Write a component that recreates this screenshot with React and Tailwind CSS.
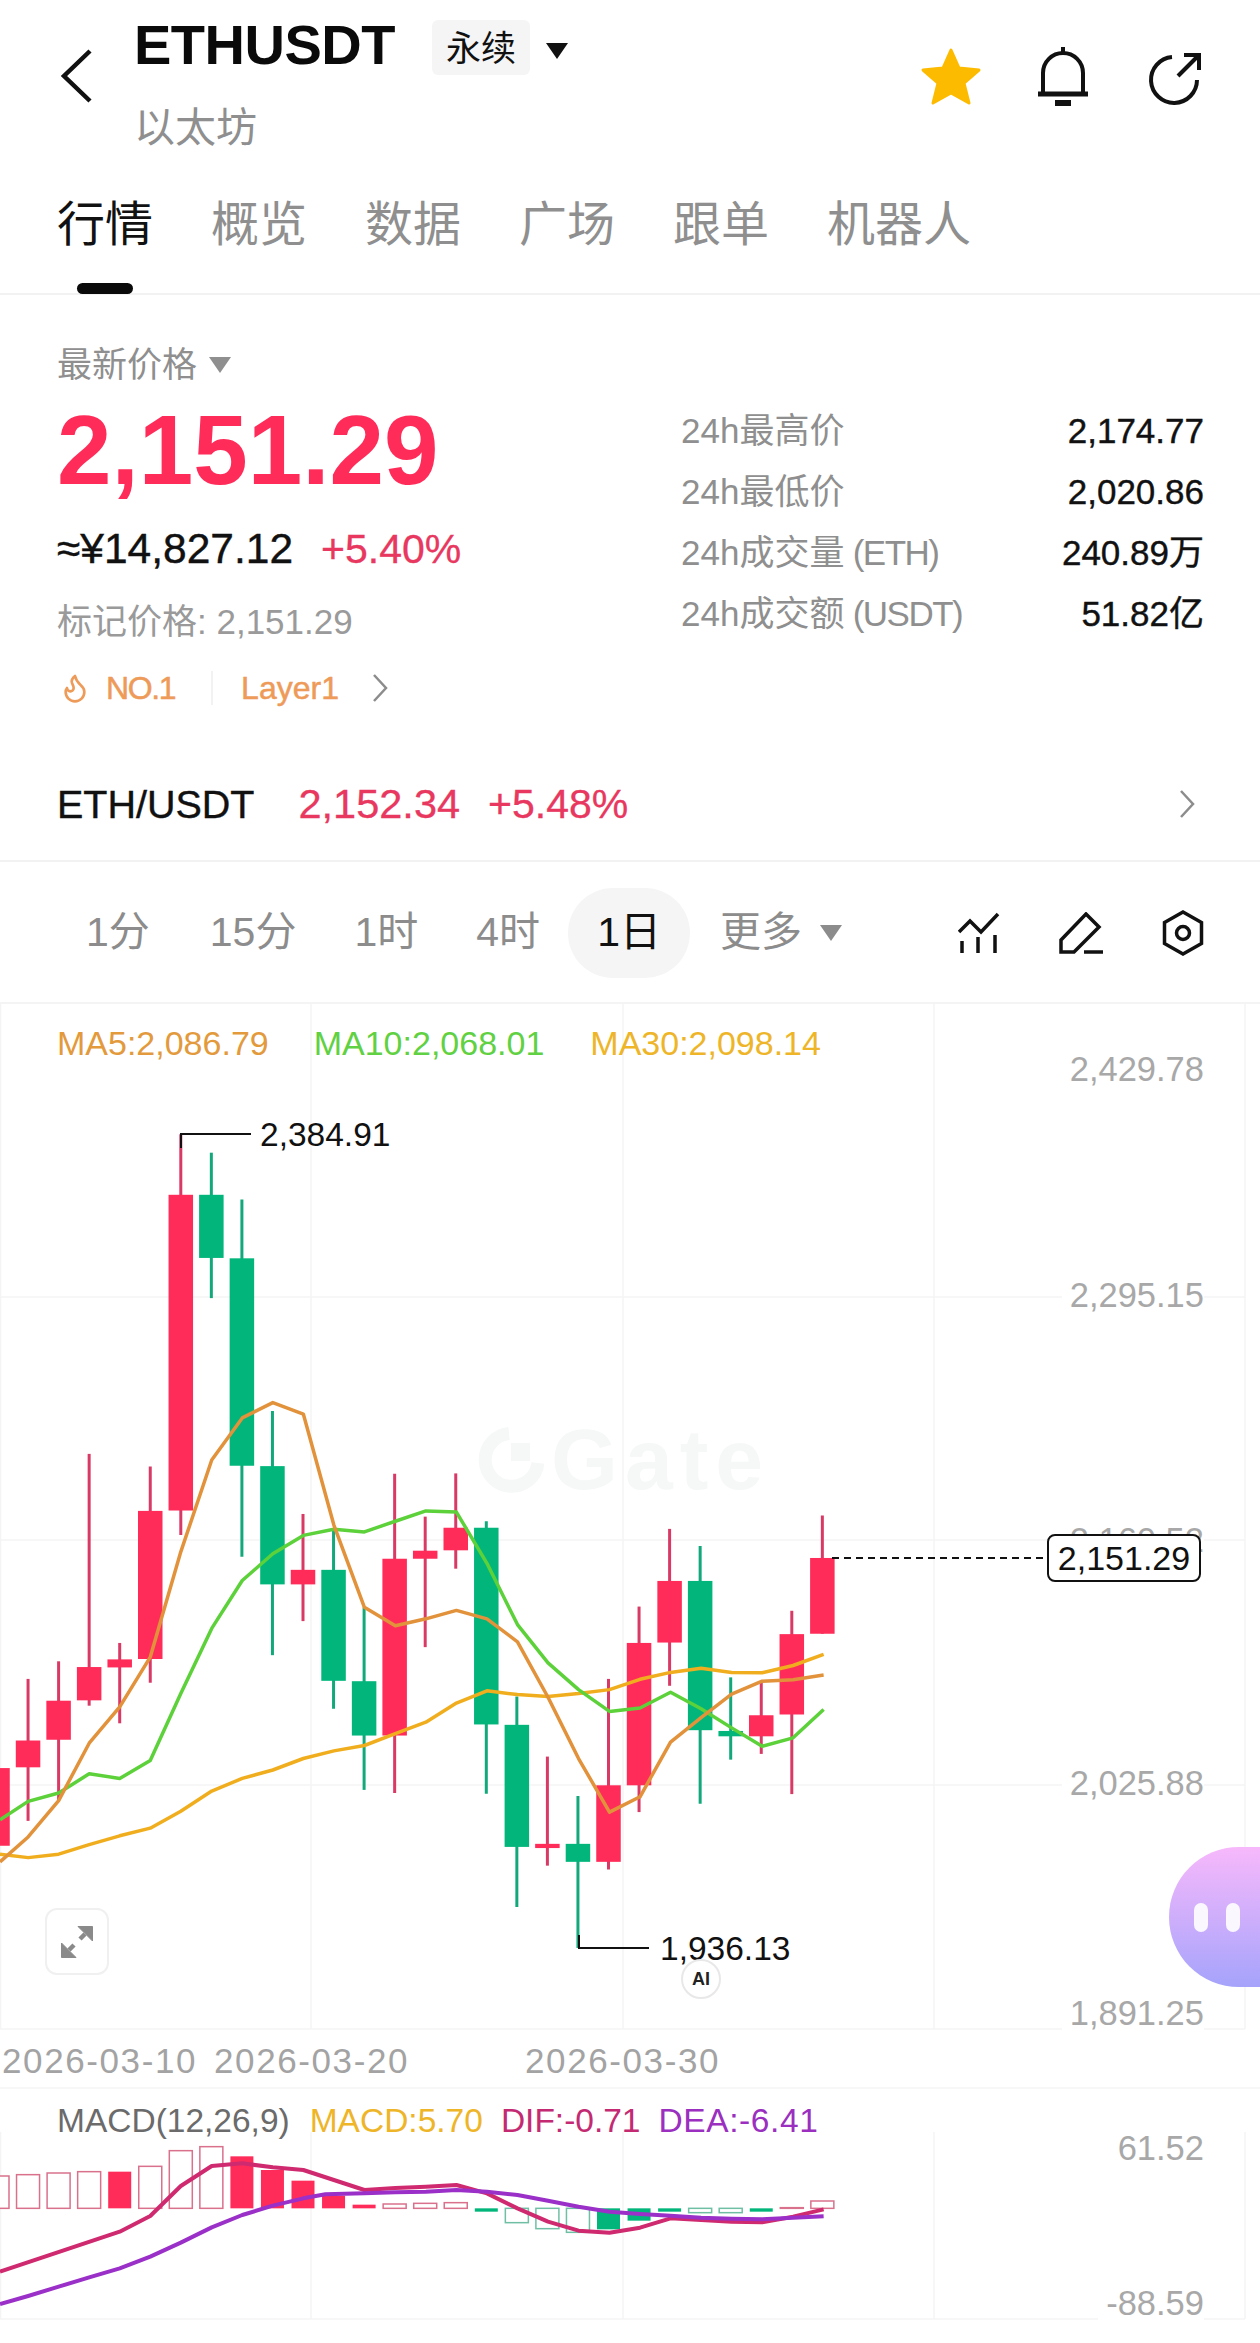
import { Flame } from 'lucide-react'

// trace units from the chart crops -> page pixels
const px = (x) => x / 2.489
const py = (y) => 1460 + y / 2.613
const my = (y) => 2040 + y / 3
const slot = (i) => -2.5 + 30.55 * i

const RED = '#ff2c5a'
const GREEN = '#02b67b'

// [up, wickTop, bodyTop, bodyBottom, wickBottom]
const candles = [
  [1, 760, 805, 1008, 1040],
  [1, 572, 733, 803, 943],
  [1, 526, 629, 731, 890],
  [1, -16, 541, 628, 642],
  [1, 478, 521, 542, 688],
  [1, 17, 133, 520, 582],
  [1, -851, -693, 132, 196],
  [0, -803, -693, -528, -423],
  [0, -681, -527, 15, 253],
  [0, -128, 16, 325, 510],
  [1, 141, 287, 325, 421],
  [0, 180, 287, 577, 650],
  [0, 385, 578, 720, 862],
  [1, 36, 258, 720, 870],
  [1, 148, 237, 258, 489],
  [1, 35, 177, 236, 284],
  [0, 160, 177, 691, 872],
  [0, 618, 692, 1011, 1168],
  [1, 775, 1003, 1014, 1060],
  [0, 878, 1003, 1050, 1275],
  [1, 572, 850, 1050, 1070],
  [1, 383, 478, 850, 920],
  [1, 180, 316, 477, 590],
  [0, 225, 316, 706, 898],
  [0, 568, 708, 722, 783],
  [1, 580, 667, 722, 768],
  [1, 394, 455, 665, 873],
  [1, 145, 256, 454, 454],
]

const ma30 = [[0, 1030], [70, 1039], [146, 1030], [222, 1005], [298, 982], [374, 962], [450, 918], [527, 865], [603, 832], [679, 810], [755, 780], [831, 760], [907, 746], [984, 715], [1060, 685], [1136, 635], [1212, 603], [1288, 613], [1364, 618], [1440, 610], [1517, 600], [1593, 573], [1669, 555], [1745, 544], [1821, 555], [1897, 556], [1974, 537], [2050, 508]]
const ma10 = [[0, 940], [70, 892], [146, 870], [222, 820], [298, 832], [374, 785], [450, 610], [527, 440], [603, 315], [679, 245], [755, 197], [831, 181], [907, 188], [984, 160], [1060, 133], [1136, 136], [1212, 270], [1288, 430], [1364, 530], [1440, 600], [1517, 657], [1593, 648], [1669, 607], [1745, 650], [1821, 700], [1897, 748], [1974, 726], [2050, 652]]
const ma5 = [[0, 1050], [70, 985], [146, 890], [222, 740], [298, 645], [374, 515], [450, 240], [527, 0], [603, -110], [679, -150], [755, -120], [831, 170], [907, 385], [984, 433], [1060, 415], [1136, 393], [1212, 415], [1288, 475], [1364, 620], [1440, 780], [1517, 920], [1593, 880], [1669, 737], [1745, 673], [1821, 612], [1897, 578], [1974, 574], [2050, 562]]

const dif = [[0, 695], [298, 575], [374, 528], [450, 438], [527, 378], [603, 370], [679, 382], [755, 390], [831, 420], [907, 450], [984, 444], [1060, 440], [1136, 435], [1212, 460], [1288, 505], [1364, 545], [1440, 572], [1517, 578], [1593, 563], [1669, 535], [1745, 540], [1821, 545], [1897, 547], [1974, 530], [2050, 508]]
const dea = [[0, 792], [70, 768], [146, 740], [222, 712], [298, 685], [374, 650], [450, 608], [527, 562], [603, 525], [679, 497], [755, 475], [810, 463], [907, 460], [984, 457], [1060, 455], [1136, 450], [1212, 455], [1288, 465], [1364, 482], [1440, 500], [1517, 515], [1593, 522], [1669, 527], [1745, 533], [1821, 536], [1897, 538], [1974, 533], [2050, 529]]

// [value edge, solid, colour]
const bars = [
  [408, 0, 'r'], [404, 0, 'r'], [399, 0, 'r'], [395, 0, 'r'], [395, 1, 'r'], [379, 0, 'r'], [332, 0, 'r'],
  [320, 0, 'r'], [349, 1, 'r'], [390, 1, 'r'], [422, 1, 'r'], [467, 1, 'r'], [494, 1, 'r'], [492, 0, 'r'],
  [490, 0, 'r'], [488, 0, 'r'], [515, 1, 'g'], [548, 0, 'g'], [566, 0, 'g'], [577, 0, 'g'], [568, 1, 'g'],
  [542, 1, 'g'], [515, 1, 'g'], [518, 0, 'g'], [518, 0, 'g'], [515, 1, 'g'], [503, 0, 'r'], [483, 0, 'r'],
]

const toPoints = (line, toY) => line.map(([x, y]) => `${px(x)},${toY(y)}`).join(' ')

function ChartDrawing() {
  return (
    <svg className="absolute inset-0" width="1260" height="1341" viewBox="0 1002 1260 1341" fill="none">
      <g stroke="#f4f4f4" strokeWidth="1.5">
        <line x1="0" y1="1003" x2="1260" y2="1003" strokeWidth="2" />
        <line x1="0" y1="1297" x2="1245" y2="1297" />
        <line x1="0" y1="1540" x2="1245" y2="1540" />
        <line x1="0" y1="1785" x2="1245" y2="1785" />
        <line x1="0" y1="2029" x2="1245" y2="2029" />
        <line x1="0" y1="2088" x2="1260" y2="2088" />
        <line x1="0" y1="2319" x2="1245" y2="2319" />
        {[0.5, 311, 623, 934, 1245].map((x) => (
          <g key={x}>
            <line x1={x} y1="1003" x2={x} y2="2029" />
            <line x1={x} y1="2132" x2={x} y2="2319" />
          </g>
        ))}
      </g>

      {/* watermark mark */}
      <g>
        <path d="M509 1433.5 A26.5 26.5 0 1 0 538 1463" stroke="#f6f7f7" strokeWidth="13" />
        <rect x="511" y="1443" width="19" height="18" fill="#f6f7f7" />
      </g>

      {candles.map(([up, wt, bt, bb, wb], i) => (
        <g key={i}>
          <line x1={slot(i)} x2={slot(i)} y1={py(wt)} y2={py(wb)} stroke={up ? '#d93a65' : '#12a87a'} strokeWidth="3" />
          <rect x={slot(i) - 12.25} y={py(bt)} width="24.5" height={py(bb) - py(bt)} fill={up ? RED : GREEN} />
        </g>
      ))}

      <polyline points={toPoints(ma30, py)} stroke="#f0ae1e" strokeWidth="3.5" strokeLinejoin="round" />
      <polyline points={toPoints(ma10, py)} stroke="#5cd13a" strokeWidth="3.5" strokeLinejoin="round" />
      <polyline points={toPoints(ma5, py)} stroke="#e2923a" strokeWidth="3.5" strokeLinejoin="round" />

      <polyline points="181,1148 181,1134 251,1134" stroke="#111" strokeWidth="2" />
      <polyline points="579,1935 579,1948 649,1948" stroke="#111" strokeWidth="2" />
      <line x1="832" y1="1558" x2="1047" y2="1558" stroke="#111" strokeWidth="2" strokeDasharray="7 5" />

      {bars.map(([edge, solid, tone], i) => {
        const top = Math.min(my(edge), my(505))
        const h = Math.abs(my(edge) - my(505))
        const color = tone === 'r' ? RED : GREEN
        return solid ? (
          <rect key={i} x={slot(i) - 11.5} y={top} width="23" height={h} fill={color} />
        ) : (
          <rect key={i} x={slot(i) - 11.5} y={top} width="23" height={h} fill="#fff" stroke={tone === 'r' ? '#d9718c' : '#6fbfa5'} strokeWidth="1.5" />
        )
      })}
      <polyline points={toPoints(dif, my)} stroke="#cf2a6f" strokeWidth="4" strokeLinejoin="round" />
      <polyline points={toPoints(dea, my)} stroke="#9a30c8" strokeWidth="4" strokeLinejoin="round" />
    </svg>
  )
}

function AxisLabel({ top, children }) {
  return (
    <span style={{ top }} className="absolute right-[56px] bg-white pl-2 text-[34.5px] leading-[36px] text-[#a8a8a8]">
      {children}
    </span>
  )
}

function Chevron({ className }) {
  return (
    <svg className={className} width="18" height="32" viewBox="0 0 18 32" fill="none" stroke="#8c8c8c" strokeWidth="2.5">
      <polyline points="3,3 15,16 3,29" />
    </svg>
  )
}

function Caret({ className }) {
  return <div className={`border-x-[11px] border-t-[16px] border-x-transparent ${className}`} />
}

function Stat({ label, suffix, value }) {
  return (
    <div className="flex h-[61px] items-center justify-between text-[35px]">
      <span className="text-[#8f8f8f]">
        {label}
        {suffix && <span className="tracking-[-1.5px]"> {suffix}</span>}
      </span>
      <span className="text-[#111] [-webkit-text-stroke:0.4px_#111]">{value}</span>
    </div>
  )
}

function Header() {
  return (
    <header className="h-[295px] border-b-2 border-[#f2f2f2]">
      <div className="flex h-[170px] pr-[56px]">
        <svg className="ml-[60px] mt-[48px]" width="34" height="56" viewBox="0 0 34 56" fill="none" stroke="#111" strokeWidth="4.5">
          <polyline points="30,3 4,28 30,53" />
        </svg>
        <div className="ml-[40px] pt-[13px]">
          <div className="flex items-start">
            <span className="text-[56px] font-bold leading-[64px] tracking-[-0.5px] text-[#0a0a0a]">ETHUSDT</span>
            <span className="ml-[37px] mt-[7px] flex h-[55px] w-[98px] items-center justify-center rounded-md bg-[#f5f5f5] pt-[3px] text-[35px] text-[#111]">永续</span>
            <Caret className="ml-[16px] mt-[30px] border-t-[#111]" />
          </div>
          <div className="mt-[27px] text-[41px] leading-[48px] text-[#8f8f8f]">以太坊</div>
        </div>
        <svg className="ml-auto mt-[47px]" width="62" height="60" viewBox="0 0 62 60">
          <path d="M31 3 L39 21 L59 23 L44 36 L49 56 L31 46 L13 56 L18 36 L3 23 L23 21 Z" fill="#fdbb00" stroke="#fdbb00" strokeWidth="3" strokeLinejoin="round" />
        </svg>
        <svg className="ml-[55px] mt-[47px]" width="52" height="60" viewBox="0 0 52 60" fill="none" stroke="#111" strokeWidth="4">
          <path d="M6 46 V26 A20 20 0 0 1 46 26 V46" />
          <path d="M1 47 H51" strokeWidth="5" />
          <path d="M26 0 V6" />
          <path d="M18 56 H34" strokeWidth="6" />
        </svg>
        <svg className="ml-[59px] mt-[50px]" width="56" height="56" viewBox="0 0 56 56" fill="none" stroke="#111" strokeWidth="4">
          <path d="M24 7 A23 23 0 1 0 49 30" />
          <path d="M30 26 L50 6" />
          <path d="M36 5 H51 V20" />
        </svg>
      </div>
      <nav className="flex gap-[58px] pl-[57px] pt-[27px] text-[48px] leading-[56px] text-[#8f8f8f]">
        <div className="flex flex-col items-center text-[#111]">
          <span>行情</span>
          <span className="mt-[30px] h-[11px] w-[56px] rounded-full bg-[#0a0a0a]" />
        </div>
        <span>概览</span>
        <span>数据</span>
        <span>广场</span>
        <span>跟单</span>
        <span>机器人</span>
      </nav>
    </header>
  )
}

function PriceSection() {
  return (
    <section className="h-[567px] border-b-2 border-[#f2f2f2] pl-[57px]">
      <div className="flex">
        <div className="w-[624px] pt-[50px]">
          <div className="flex items-center text-[35px] leading-[40px] text-[#8f8f8f]">
            最新价格
            <Caret className="ml-[12px] border-x-[10px] border-t-[14px] border-t-[#8f8f8f]" />
          </div>
          <div className="mt-[15px] text-[98px] font-bold leading-[100px] text-[#ff2c5a]">2,151.29</div>
          <div className="mt-[25px] flex text-[42.5px] leading-[48px]">
            <span className="text-[#111] [-webkit-text-stroke:0.4px_#111]">≈¥14,827.12</span>
            <span className="ml-[28px] text-[41px] text-[#e8385f] [-webkit-text-stroke:0.3px_#e8385f]">+5.40%</span>
          </div>
          <div className="mt-[29px] text-[35px] leading-[40px] text-[#9a9a9a]">标记价格: 2,151.29</div>
          <div className="mt-[26px] flex h-[40px] items-center text-[32px] text-[#ee9a58] [-webkit-text-stroke:0.5px_#ee9a58]">
            <Flame size={32} strokeWidth={2} className="ml-[2px]" />
            <span className="ml-[15px] tracking-[-1.4px]">NO.1</span>
            <span className="ml-[36px] h-[34px] w-[2px] bg-[#f2f2f2]" />
            <span className="ml-[28px]">Layer1</span>
            <Chevron className="ml-[32px]" />
          </div>
        </div>
        <div className="w-[523px] pt-[106px]">
          <Stat label="24h最高价" value="2,174.77" />
          <Stat label="24h最低价" value="2,020.86" />
          <Stat label="24h成交量" suffix="(ETH)" value="240.89万" />
          <Stat label="24h成交额" suffix="(USDT)" value="51.82亿" />
        </div>
      </div>
      <div className="mt-[72px] flex items-center pr-[64px] text-[41.5px] leading-[48px]">
        <span className="text-[39.5px] text-[#111] [-webkit-text-stroke:0.4px_#111]">ETH/USDT</span>
        <span className="ml-[44px] text-[#e8385f] [-webkit-text-stroke:0.3px_#e8385f]">2,152.34</span>
        <span className="ml-[28px] text-[41px] text-[#e8385f] [-webkit-text-stroke:0.3px_#e8385f]">+5.48%</span>
        <Chevron className="ml-auto" />
      </div>
    </section>
  )
}

function IntervalBar() {
  return (
    <div className="flex h-[140px] items-center pl-[86px] pr-[56px] pt-[2px] text-[41px] text-[#8c8c8c]">
      <span>1分</span>
      <span className="ml-[60px]">15分</span>
      <span className="ml-[58px]">1时</span>
      <span className="ml-[58px]">4时</span>
      <span className="ml-[28px] flex h-[90px] w-[122px] items-center justify-center rounded-full bg-[#f5f5f5] text-[#111]">1日</span>
      <span className="ml-[30px]">更多</span>
      <Caret className="ml-[18px] border-t-[#8c8c8c]" />
      <svg className="ml-auto" width="42" height="42" viewBox="0 0 42 42" fill="none" stroke="#111" strokeWidth="3.5">
        <polyline points="1,20 12,9 23,20 40,2" />
        <path d="M4 29 V41 M20 25 V41 M37 23 V41" />
      </svg>
      <svg className="ml-[59px]" width="44" height="42" viewBox="0 0 44 42" fill="none" stroke="#111" strokeWidth="3.5">
        <path d="M2 28 L27 2 L40 15 L15 40 H2 Z" />
        <path d="M25 40 H44" />
      </svg>
      <svg className="ml-[59px]" width="42" height="46" viewBox="0 0 42 46" fill="none" stroke="#111" strokeWidth="3.5">
        <path d="M21 2 L39.5 12.5 V33.5 L21 44 L2.5 33.5 V12.5 Z" />
        <circle cx="21" cy="23" r="6.5" />
      </svg>
    </div>
  )
}

function ChartArea() {
  return (
    <section className="relative h-[1341px]">
      <ChartDrawing />

      <span className="absolute left-[551px] top-[424px] text-[86px] font-bold leading-[66px] tracking-[7px] text-[#f6f7f7]">Gate</span>

      <div className="relative flex h-[82px] items-center pl-[57px] text-[34px]">
        <span className="text-[#e39a3c]">MA5:2,086.79</span>
        <span className="ml-[45px] text-[#5fd142]">MA10:2,068.01</span>
        <span className="ml-[46px] text-[#eeb529]">MA30:2,098.14</span>
      </div>

      <AxisLabel top={49}>2,429.78</AxisLabel>
      <AxisLabel top={275}>2,295.15</AxisLabel>
      <AxisLabel top={520}>2,160.52</AxisLabel>
      <AxisLabel top={763}>2,025.88</AxisLabel>
      <AxisLabel top={993}>1,891.25</AxisLabel>
      <AxisLabel top={1128}>61.52</AxisLabel>
      <AxisLabel top={1283}>-88.59</AxisLabel>

      <span className="absolute left-[260px] top-[115px] text-[33.5px] leading-[36px] text-[#111]">2,384.91</span>
      <span className="absolute left-[660px] top-[929px] text-[33.5px] leading-[36px] text-[#111]">1,936.13</span>
      <span className="absolute left-[1047px] top-[532px] flex h-[48px] w-[154px] items-center justify-center rounded-lg border-2 border-[#111] bg-white text-[34px] text-[#111]">2,151.29</span>

      <span className="absolute left-[681px] top-[957px] flex h-[40px] w-[40px] items-center justify-center rounded-full border-2 border-[#e8e8e8] bg-white text-[18px] font-bold text-[#222]">AI</span>

      <button className="absolute left-[45px] top-[906px] flex h-[67px] w-[64px] items-center justify-center rounded-xl border-2 border-[#f0f0f0] bg-white">
        <svg width="32" height="32" viewBox="0 0 32 32" fill="#8a8a8a" stroke="#8a8a8a" strokeWidth="1">
          <polygon points="31.5,0.5 31.5,15 17,0.5" />
          <polygon points="0.5,31.5 0.5,17 15,31.5" />
          <path d="M24 8 L19 13 M8 24 L13 19" strokeWidth="4.5" />
        </svg>
      </button>

      <div className="absolute right-0 top-[845px] flex h-[140px] w-[91px] items-center gap-[18px] rounded-l-[70px] bg-gradient-to-b from-[#f7b8fb] to-[#a5a3fb] pl-[25px]">
        <span className="h-[29px] w-[14px] rounded-full bg-white/90" />
        <span className="h-[29px] w-[14px] rounded-full bg-white/90" />
      </div>

      <div className="absolute left-0 top-[1037px] w-[900px] whitespace-nowrap text-[35px] leading-[44px] tracking-[1.6px] text-[#a3a3a3]">
        <span className="absolute left-[2px]">2026-03-10</span>
        <span className="absolute left-[214px]">2026-03-20</span>
        <span className="absolute left-[525px]">2026-03-30</span>
      </div>

      <div className="absolute left-[57px] top-[1097px] flex whitespace-nowrap text-[33.5px] leading-[44px]">
        <span className="text-[#6b6b6b]">MACD(12,26,9)</span>
        <span className="ml-[20px] text-[#eeb529]">MACD:5.70</span>
        <span className="ml-[18px] text-[#c42a72]">DIF:-0.71</span>
        <span className="ml-[18px] tracking-[0.6px] text-[#9a2fc0]">DEA:-6.41</span>
      </div>
    </section>
  )
}

export default function App() {
  return (
    <div className="h-[2343px] w-[1260px] overflow-hidden bg-white [font-family:'Liberation_Sans','Noto_Sans_CJK_SC',sans-serif]">
      <Header />
      <PriceSection />
      <IntervalBar />
      <ChartArea />
    </div>
  )
}
